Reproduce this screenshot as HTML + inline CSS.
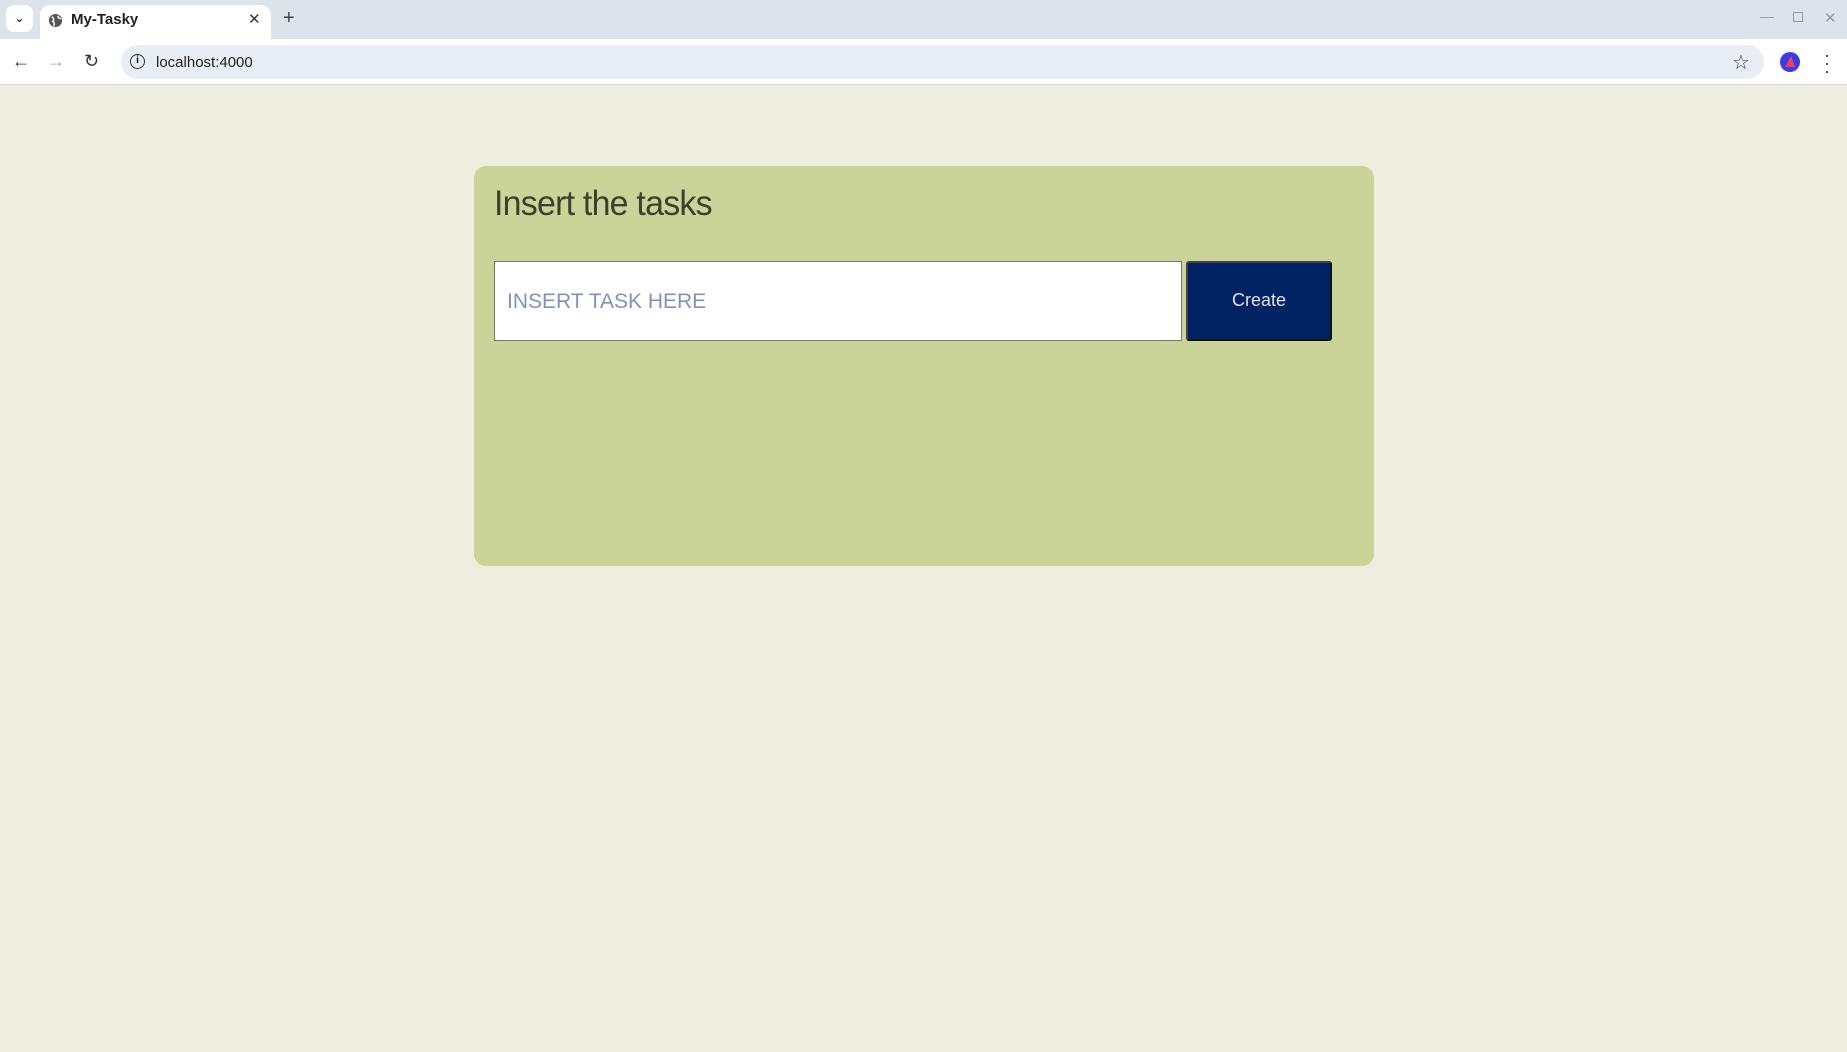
<!DOCTYPE html>
<html><head><meta charset="utf-8"><style>
*{box-sizing:border-box;margin:0;padding:0}
body{width:1847px;height:1052px;background:#edeedf;font-family:"Liberation Sans",sans-serif;position:relative;overflow:hidden}
.tabbar{position:absolute;left:0;top:0;width:1847px;height:39px;background:#dde3ea}
.tab{position:absolute;left:40px;top:5px;width:231px;height:34px;background:#fff;border-radius:10px 10px 0 0}
.toolbar{position:absolute;left:0;top:39px;width:1847px;height:46px;background:#fff;border-bottom:1px solid #d8d8d8}
.omni{position:absolute;left:121px;top:6px;width:1643px;height:34px;background:#e9edf6;border-radius:17px}
.card{position:absolute;left:474px;top:166px;width:900px;height:400px;background:#cad498;border-radius:12px}
h1{position:absolute;left:494px;top:184px;font-size:35px;font-weight:normal;color:#3f3f30;letter-spacing:-0.8px;transform:scaleX(0.97);transform-origin:left}
.inp{position:absolute;left:494px;top:261px;width:688px;height:80px;background:#fff;border:1px solid #777;font-size:21px;color:#8193b5;padding:28px 0 0 12px}
.btn{position:absolute;left:1186px;top:261px;width:146px;height:80px;background:#012363;border:2px solid #111;border-top-color:#444;border-left-color:#444;border-radius:3px;color:#dfe3ee;font-size:18px;text-align:center;line-height:74px}
</style></head><body>
<div class="tabbar">
 <div style="position:absolute;left:6px;top:5px;width:27px;height:27px;background:#fff;border-radius:8px;font-size:12px;text-align:center;line-height:27px">⌄</div>
 <div class="tab">
  <svg style="position:absolute;left:8px;top:8px" width="15" height="15" viewBox="0 0 16 16"><circle cx="8" cy="8" r="7" fill="#555"/><path d="M4 4c2 1 3 3 1 5 2 1 2 3 1 5M11 3c-1 2 1 3 3 3" stroke="#fff" stroke-width="1.5" fill="none"/></svg>
  <span style="position:absolute;left:31px;top:6px;font-size:15px;color:#222;font-weight:bold">My-Tasky</span>
  <span style="position:absolute;left:208px;top:5px;font-size:15px;color:#333">✕</span>
 </div>
 <span style="position:absolute;left:283px;top:7px;font-size:20px;color:#444">+</span>
 <span style="position:absolute;left:1760px;top:8px;font-size:14px;color:#999">—</span>
 <span style="position:absolute;left:1793px;top:12px;width:10px;height:10px;border:1.5px solid #999"></span>
 <span style="position:absolute;left:1824px;top:9px;font-size:15px;color:#999">✕</span>
</div>
<div class="toolbar">
 <span style="position:absolute;left:12px;top:12px;font-size:18px;color:#333">←</span>
 <span style="position:absolute;left:47px;top:12px;font-size:18px;color:#aaa">→</span>
 <span style="position:absolute;left:84px;top:12px;font-size:18px;color:#333">↻</span>
 <div class="omni">
  <span style="position:absolute;left:9px;top:9px;width:15px;height:15px;border:1.5px solid #333;border-radius:50%;font-size:10px;text-align:center;line-height:12px;font-weight:bold">i</span>
  <span style="position:absolute;left:35px;top:9px;font-size:15px;color:#222">localhost:4000</span>
  <span style="position:absolute;left:1611px;top:5px;font-size:20px;color:#333">☆</span>
 </div>
 <div style="position:absolute;left:1780px;top:13px;width:20px;height:20px;border-radius:50%;background:#3c3ce0"><div style="position:absolute;left:5px;top:4px;width:0;height:0;border-left:6px solid transparent;border-right:4px solid transparent;border-bottom:11px solid #f04060"></div></div>
 <span style="position:absolute;left:1824px;top:12px;font-size:18px;color:#333;line-height:8px">·<br>·<br>·</span>
</div>
<div class="card"></div>
<h1>Insert the tasks</h1>
<div class="inp">INSERT TASK HERE</div>
<div class="btn">Create</div>
</body></html>
